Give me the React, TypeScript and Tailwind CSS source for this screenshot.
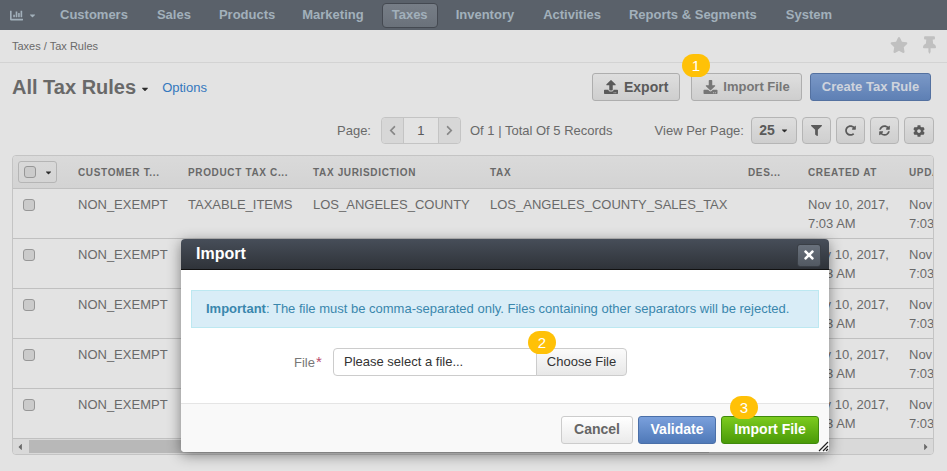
import React from "react";
import {
  FaChartBar, FaCaretDown, FaStar, FaThumbtack, FaUpload, FaDownload, FaChevronLeft, FaChevronRight,
  FaFilter, FaRedoAlt, FaSyncAlt, FaCog, FaTimes, FaCaretLeft, FaCaretRight,
} from "react-icons/fa";

const navItems: [string, string][] = [
  ["Customers", "ml-[23px]"],
  ["Sales", "ml-[29px]"],
  ["Products", "ml-[28px]"],
  ["Marketing", "ml-[27px]"],
];
const navRest: [string, string][] = [
  ["Inventory", "ml-[18px]"],
  ["Activities", "ml-[29px]"],
  ["Reports & Segments", "ml-[28px]"],
  ["System", "ml-[29px]"],
];

const cols = "grid grid-cols-[65px_110px_125px_177px_258px_60px_101px_100px]";

function Check() {
  return <span className="block w-[12px] h-[12px] rounded-[3px] border border-[#aaa] bg-[#e4e4e4]" />;
}

function Badge({ n, className }: { n: number; className: string }) {
  return (
    <div className={"absolute z-30 w-[28px] h-[23px] rounded-full bg-[#ffc107] text-white text-[15px] leading-[23px] text-center " + className}>
      {n}
    </div>
  );
}

function ToolBtn({ children, w }: { children: React.ReactNode; w: string }) {
  return (
    <div className={"h-[27px] rounded-[4px] border border-[#ccc] bg-gradient-to-b from-[#fafafa] to-[#e8e8e8] flex items-center justify-center text-[#666] " + w}>
      {children}
    </div>
  );
}

function Row() {
  return (
    <div className={cols + " h-[50px] shrink-0 border-b border-[#d8d8d8] text-[13px] leading-[19px] pt-[6px] whitespace-nowrap"}>
      <div className="pl-[10px] pt-[4px]"><Check /></div>
      <div>NON_EXEMPT</div>
      <div>TAXABLE_ITEMS</div>
      <div>LOS_ANGELES_COUNTY</div>
      <div>LOS_ANGELES_COUNTY_SALES_TAX</div>
      <div />
      <div>Nov 10, 2017,<br />7:03 AM</div>
      <div className="overflow-hidden">Nov 10, 2017,<br />7:03 AM</div>
    </div>
  );
}

export default function App() {
  return (
    <div className="relative w-[947px] h-[471px] overflow-hidden bg-white text-[#777] font-['Liberation_Sans',Arial,sans-serif]">
      {/* nav */}
      <div className="h-[30px] bg-[#666e78] flex items-center text-[13px] font-bold text-[#b6c6d2] whitespace-nowrap">
        <div className="flex items-center ml-[9px] gap-[4px]">
          <FaChartBar className="w-[15px] h-[13px]" />
          <FaCaretDown className="w-[9px] h-[9px]" />
        </div>
        {navItems.map(([t, m]) => <span key={t} className={m}>{t}</span>)}
        <span className="ml-[18px] h-[25px] w-[56px] rounded-[4px] border border-[#4d535b] bg-gradient-to-b from-[#868e98] to-[#78808a] flex items-center justify-center">Taxes</span>
        {navRest.map(([t, m]) => <span key={t} className={m}>{t}</span>)}
      </div>

      {/* breadcrumb */}
      <div className="h-[33px] border-b border-[#eee] flex items-center justify-between pl-[12px] pr-[11px] pt-[1px] text-[11px]">
        <span>Taxes / Tax Rules</span>
        <div className="flex items-center gap-[15px] text-[#d8d8d8] -mt-[3px]">
          <FaStar className="w-[18px] h-[18px]" />
          <FaThumbtack className="w-[13px] h-[18px]" />
        </div>
      </div>

      {/* title row */}
      <div className="flex items-center justify-between pl-[12px] pr-[16px] mt-[10px] h-[28px]">
        <div className="flex items-center">
          <span className="text-[20px] font-bold text-[#777]">All Tax Rules</span>
          <FaCaretDown className="w-[10px] h-[10px] ml-[4px] mt-[3px] text-[#333]" />
          <span className="ml-[12px] text-[13px] text-[#3a87d6] mt-[1px]">Options</span>
        </div>
        <div className="flex items-center">
          <div className="w-[88px] h-[28px] rounded-[3px] border border-[#c4c4c4] bg-gradient-to-b from-[#fafafa] to-[#e8e8e8] flex items-center pl-[10px] gap-[5px] text-[14px] font-bold text-[#666]">
            <FaUpload className="w-[16px] h-[14px]" /> Export
          </div>
          <div className="ml-[11px] w-[111px] h-[28px] rounded-[3px] border border-[#c4c4c4] bg-gradient-to-b from-[#fafafa] to-[#e8e8e8] flex items-center justify-center gap-[5px] text-[13px] font-bold text-[#858585]">
            <FaDownload className="w-[15px] h-[14px]" /> Import File
          </div>
          <div className="ml-[8px] w-[121px] h-[28px] rounded-[3px] border border-[#5f7fb4] bg-gradient-to-b from-[#8aabdf] to-[#6a90cb] flex items-center justify-center text-[13px] font-bold text-[#e8eef8]">
            Create Tax Rule
          </div>
        </div>
      </div>

      {/* pager row */}
      <div className="flex items-center pl-[337px] mt-[16px] h-[27px] text-[13px] whitespace-nowrap">
        <span>Page:</span>
        <div className="ml-[10px] w-[80px] h-[27px] rounded-[4px] border border-[#ddd] flex items-center text-[#666]">
          <div className="w-[21px] h-full bg-[#f2f2f2] rounded-l-[4px] flex items-center justify-center text-[#999]"><FaChevronLeft className="w-[9px] h-[11px]" /></div>
          <div className="w-[36px] h-full border-x border-[#ddd] flex items-center justify-center">1</div>
          <div className="w-[21px] h-full bg-[#f2f2f2] rounded-r-[4px] flex items-center justify-center text-[#999]"><FaChevronRight className="w-[9px] h-[11px]" /></div>
        </div>
        <span className="ml-[9px]">Of 1 | Total Of 5 Records</span>
        <span className="ml-[42px]">View Per Page:</span>
        <div className="ml-[7px] flex items-center gap-[5px]">
          <ToolBtn w="w-[46px] gap-[5px] font-bold text-[14px]">25<FaCaretDown className="w-[9px] h-[9px] text-[#333]" /></ToolBtn>
          <ToolBtn w="w-[29px]"><FaFilter className="w-[11px] h-[11px]" /></ToolBtn>
          <ToolBtn w="w-[29px]"><FaRedoAlt className="w-[11px] h-[11px]" /></ToolBtn>
          <ToolBtn w="w-[29px]"><FaSyncAlt className="w-[11px] h-[11px]" /></ToolBtn>
          <ToolBtn w="w-[30px]"><FaCog className="w-[12px] h-[12px]" /></ToolBtn>
        </div>
      </div>

      {/* table */}
      <div className="ml-[12px] mt-[11px] w-[922px] h-[300px] rounded-[4px] border border-[#ddd] overflow-hidden flex flex-col">
        <div className={cols + " h-[33px] shrink-0 items-center border-b border-[#d8d8d8] bg-gradient-to-b from-[#f5f5f5] to-[#eeeeee] text-[10px] tracking-[0.65px] font-bold text-[#777] whitespace-nowrap"}>
          <div className="pl-[5px]">
            <div className="w-[39px] h-[22px] rounded-[3px] border border-[#ccc] flex items-center pl-[5px] gap-[8px]">
              <Check />
              <FaCaretDown className="w-[9px] h-[9px] text-[#333]" />
            </div>
          </div>
          <div className="pt-[1px]">CUSTOMER T...</div>
          <div className="pt-[1px]">PRODUCT TAX C...</div>
          <div className="pt-[1px]">TAX JURISDICTION</div>
          <div className="pt-[1px]">TAX</div>
          <div className="pt-[1px]">DES...</div>
          <div className="pt-[1px]">CREATED AT</div>
          <div className="pt-[1px] overflow-hidden">UPDATED AT</div>
        </div>
        <Row />
        <Row />
        <Row />
        <Row />
        <Row />
        <div className="h-[15px] shrink-0 bg-[#f4f4f4] flex items-center text-[#777]">
          <FaCaretLeft className="w-[10px] h-[10px] ml-[2px]" />
          <div className="ml-[4px] w-[680px] h-[13px] bg-[#cfcfcf]" />
          <FaCaretRight className="w-[10px] h-[10px] ml-auto mr-[2px]" />
        </div>
      </div>

      {/* overlay */}
      <div className="absolute inset-0 z-10 bg-black/[0.11]" />

      <Badge n={1} className="left-[682px] top-[54px]" />

      {/* modal */}
      <div className="absolute z-20 left-[181px] top-[239px] w-[648px] h-[213px] rounded-[4px] bg-white shadow-[0_3px_14px_rgba(0,0,0,0.45)] flex flex-col overflow-hidden">
        <div className="h-[31px] shrink-0 border-b border-[#111] bg-gradient-to-b from-[#474e59] to-[#2f3339] flex items-center justify-between pl-[15px] pr-[8px]">
          <span className="text-[16px] font-bold text-white">Import</span>
          <div className="w-[24px] h-[23px] mt-[2px] rounded-[3px] border border-[#3a3f46] bg-gradient-to-b from-[#69717c] to-[#525962] flex items-center justify-center text-white">
            <FaTimes className="w-[14px] h-[14px]" />
          </div>
        </div>
        <div className="flex-1 px-[10px] pt-[20px] bg-white">
          <div className="h-[38px] border border-[#bce8f1] bg-[#d9edf7] text-[#3a87ad] text-[13px] flex items-center pl-[14px] whitespace-nowrap">
            <span><b>Important</b>: The file must be comma-separated only. Files containing other separators will be rejected.</span>
          </div>
          <div className="mt-[20px] flex items-center h-[28px]">
            <span className="ml-[103px] w-[39px] text-[13px] text-[#777] mt-[2px]">File<span className="text-[#b94a6a] text-[15px] leading-none ml-[1px]">*</span></span>
            <div className="w-[204px] h-[28px] rounded-l-[4px] border border-[#ccc] text-[13px] text-[#333] flex items-center pl-[10px]">Please select a file...</div>
            <div className="w-[91px] h-[28px] -ml-px rounded-r-[4px] border border-[#ccc] bg-gradient-to-b from-[#fbfbfb] to-[#e8e8e8] text-[13px] text-[#333] flex items-center justify-center">Choose File</div>
          </div>
        </div>
        <div className="relative h-[49px] shrink-0 border-t border-[#e5e5e5] bg-[#f9f9f9] flex items-center justify-end pr-[10px] pt-[3px] gap-[5px] text-[14px] font-bold">
          <div className="w-[72px] h-[28px] rounded-[3px] border border-[#ccc] bg-gradient-to-b from-white to-[#eaeaea] text-[#666] flex items-center justify-center">Cancel</div>
          <div className="w-[78px] h-[28px] rounded-[3px] border border-[#4a6fa8] bg-gradient-to-b from-[#7aa0dc] to-[#4f79b8] text-white flex items-center justify-center">Validate</div>
          <div className="w-[98px] h-[28px] rounded-[3px] border border-[#3f8a0c] bg-gradient-to-b from-[#7ccb1e] to-[#4a9a08] text-white flex items-center justify-center">Import File</div>
          <svg className="absolute right-0 bottom-0 w-[11px] h-[11px]" viewBox="0 0 11 11">
            <path d="M1 10 L10 1 M5 10 L10 5 M8 10 L10 8" stroke="#222" strokeWidth="1.2" fill="none" />
          </svg>
        </div>
      </div>

      <Badge n={2} className="left-[528px] top-[331px]" />
      <Badge n={3} className="left-[730px] top-[396px]" />
    </div>
  );
}
